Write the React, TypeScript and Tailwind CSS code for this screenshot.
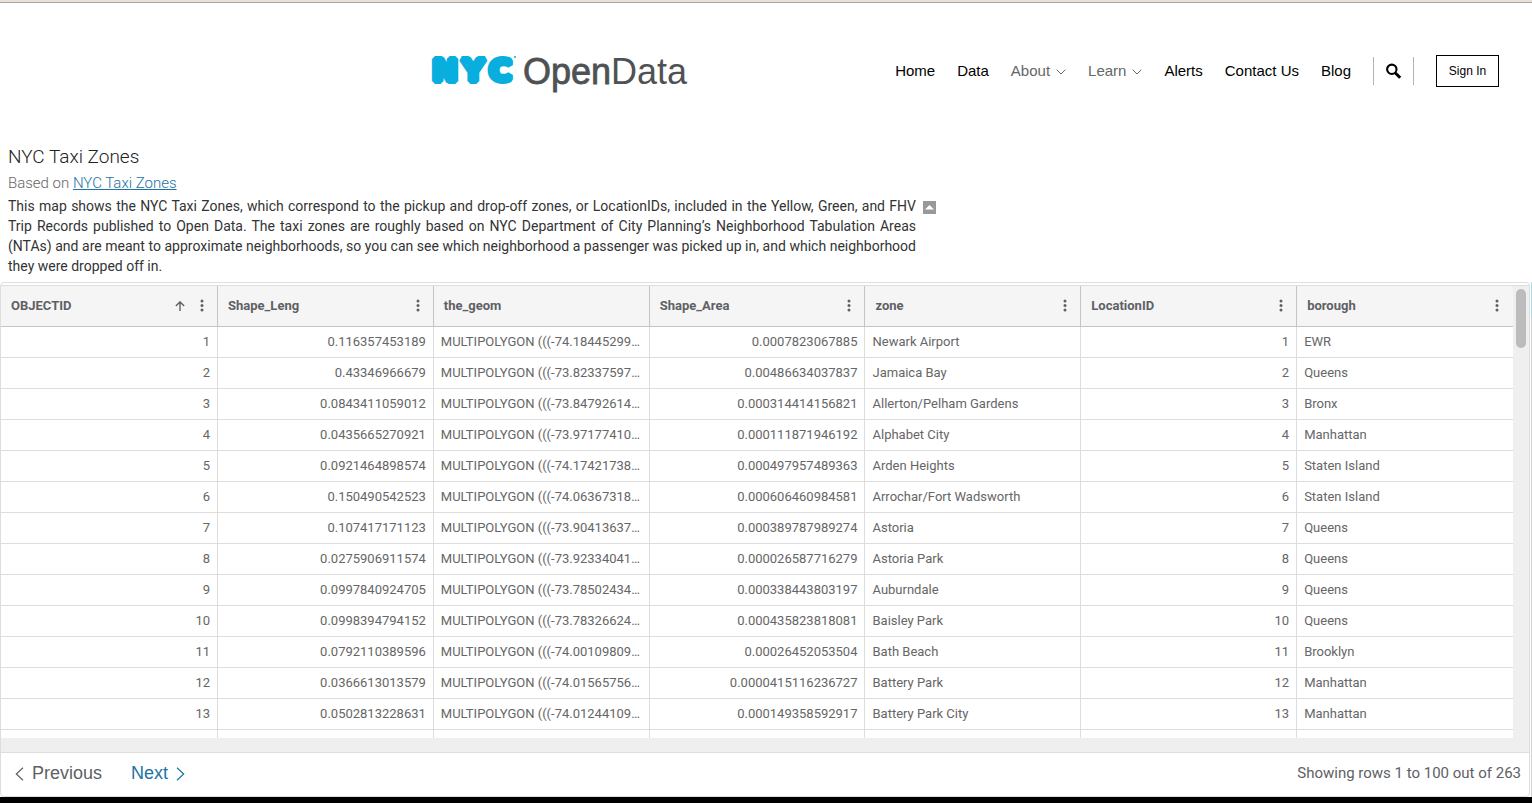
import React from "react";

type Row = [string, string, string, string, string, string, string];

const COLUMNS = [
  { name: "OBJECTID", numeric: true, menu: true, sorted: true },
  { name: "Shape_Leng", numeric: true, menu: true, sorted: false },
  { name: "the_geom", numeric: false, menu: false, sorted: false },
  { name: "Shape_Area", numeric: true, menu: true, sorted: false },
  { name: "zone", numeric: false, menu: true, sorted: false },
  { name: "LocationID", numeric: true, menu: true, sorted: false },
  { name: "borough", numeric: false, menu: true, sorted: false },
];

const ROWS: Row[] = [
  ["1", "0.116357453189", "MULTIPOLYGON (((-74.18445299…", "0.0007823067885", "Newark Airport", "1", "EWR"],
  ["2", "0.43346966679", "MULTIPOLYGON (((-73.82337597…", "0.00486634037837", "Jamaica Bay", "2", "Queens"],
  ["3", "0.0843411059012", "MULTIPOLYGON (((-73.84792614…", "0.000314414156821", "Allerton/Pelham Gardens", "3", "Bronx"],
  ["4", "0.0435665270921", "MULTIPOLYGON (((-73.97177410…", "0.000111871946192", "Alphabet City", "4", "Manhattan"],
  ["5", "0.0921464898574", "MULTIPOLYGON (((-74.17421738…", "0.000497957489363", "Arden Heights", "5", "Staten Island"],
  ["6", "0.150490542523", "MULTIPOLYGON (((-74.06367318…", "0.000606460984581", "Arrochar/Fort Wadsworth", "6", "Staten Island"],
  ["7", "0.107417171123", "MULTIPOLYGON (((-73.90413637…", "0.000389787989274", "Astoria", "7", "Queens"],
  ["8", "0.0275906911574", "MULTIPOLYGON (((-73.92334041…", "0.000026587716279", "Astoria Park", "8", "Queens"],
  ["9", "0.0997840924705", "MULTIPOLYGON (((-73.78502434…", "0.000338443803197", "Auburndale", "9", "Queens"],
  ["10", "0.0998394794152", "MULTIPOLYGON (((-73.78326624…", "0.000435823818081", "Baisley Park", "10", "Queens"],
  ["11", "0.0792110389596", "MULTIPOLYGON (((-74.00109809…", "0.00026452053504", "Bath Beach", "11", "Brooklyn"],
  ["12", "0.0366613013579", "MULTIPOLYGON (((-74.01565756…", "0.0000415116236727", "Battery Park", "12", "Manhattan"],
  ["13", "0.0502813228631", "MULTIPOLYGON (((-74.01244109…", "0.000149358592917", "Battery Park City", "13", "Manhattan"],
];

function Logo() {
  return (
    <a href="#home" aria-label="NYC OpenData" className="shrink-0">
      <svg width="262" height="44" viewBox="0 0 262 44" className="block">
        <g
          fontFamily="DejaVu Sans, sans-serif"
          fontWeight="700"
          fontSize="31"
          fill="#08aedd"
          stroke="#08aedd"
          strokeWidth="6"
          strokeLinejoin="bevel"
        >
          <text x="3" y="32">N</text>
          <text x="33" y="32">Y</text>
          <text x="60" y="32">C</text>
        </g>
        <circle cx="86" cy="8" r="1" fill="#08aedd" />
        <text x="94" y="35" fontFamily="Liberation Sans, sans-serif" fontSize="36" fill="#4f5254">
          <tspan stroke="#4f5254" strokeWidth="0.8">Open</tspan>
          <tspan>Data</tspan>
        </text>
      </svg>
    </a>
  );
}

function Chevron() {
  return (
    <svg width="10" height="6" viewBox="0 0 10 6" fill="none" stroke="currentColor" className="mt-[3px]">
      <path d="M0.7 0.7 5 5 9.3 0.7" />
    </svg>
  );
}

function KebabIcon() {
  return (
    <svg width="4" height="14" viewBox="0 0 4 14" fill="#5e6164">
      <circle cx="2" cy="2" r="1.5" />
      <circle cx="2" cy="6.5" r="1.5" />
      <circle cx="2" cy="11" r="1.5" />
    </svg>
  );
}

function SortIcon() {
  return (
    <svg width="10" height="10" viewBox="0 0 10 10" fill="none" stroke="#5e6164" strokeWidth="1.4">
      <path d="M5 10V1M0.8 5 5 0.9 9.2 5" />
    </svg>
  );
}

export default function App() {
  return (
    <div className="flex h-screen flex-col bg-white font-['Liberation_Sans',sans-serif]">
      <div className="h-[3px] shrink-0 border-b border-[#a9a5a5] bg-[#ede1d6]" />

      <header className="flex h-[135px] shrink-0 items-center justify-between pr-[33px] pl-[28%]">
        <Logo />
        <nav className="flex items-center gap-[22px] text-[15px] leading-5 whitespace-nowrap text-black">
          <a href="#home">Home</a>
          <a href="#data">Data</a>
          <button type="button" className="flex items-center gap-[6px] text-[#666]">
            About <Chevron />
          </button>
          <button type="button" className="flex items-center gap-[6px] text-[#666]">
            Learn <Chevron />
          </button>
          <a href="#alerts">Alerts</a>
          <a href="#contact">Contact Us</a>
          <a href="#blog">Blog</a>
          <button
            type="button"
            aria-label="Search"
            className="flex h-7 w-[41px] items-center justify-center border-x border-[#b3b3b3]"
          >
            <svg width="16" height="16" viewBox="0 0 16 16" fill="none" stroke="#000">
              <circle cx="5.8" cy="6.3" r="4.7" strokeWidth="2.1" />
              <path d="M9.4 10 14.2 14.7" strokeWidth="3" />
            </svg>
          </button>
          <a href="#signin" className="flex h-8 w-[63px] items-center justify-center border border-black text-xs">
            Sign In
          </a>
        </nav>
      </header>

      <section className="shrink-0 px-2 pt-2 pb-[6px] font-[Roboto,sans-serif]">
        <h1 className="text-[19px] leading-[22px] font-light text-[#222]">NYC Taxi Zones</h1>
        <p className="pt-[5px] text-[15px] leading-5 font-light text-[#666]">
          Based on{" "}
          <a href="#source" className="text-[#1b74a3] underline">
            NYC Taxi Zones
          </a>
        </p>
        <div className="flex items-start gap-[7px] pt-[3px]">
          <p className="w-[908px] text-justify text-sm leading-5 text-[#333]">
            This map shows the NYC Taxi Zones, which correspond to the pickup and drop-off zones, or LocationIDs,
            included in the Yellow, Green, and FHV Trip Records published to Open Data. The taxi zones are roughly
            based on NYC Department of City Planning’s Neighborhood Tabulation Areas (NTAs) and are meant to
            approximate neighborhoods, so you can see which neighborhood a passenger was picked up in, and which
            neighborhood they were dropped off in.
          </p>
          <button
            type="button"
            aria-label="Collapse description"
            className="mt-[5px] flex size-[13px] items-center justify-center bg-[#999]"
          >
            <svg width="9" height="5" viewBox="0 0 9 5" fill="#fff">
              <path d="M0 4.5 4.5 0 9 4.5Z" />
            </svg>
          </button>
        </div>
      </section>

      <div className="flex min-h-0 flex-1 gap-px border-b-[6px] border-black">
        <main className="flex min-w-0 flex-1 flex-col rounded border border-[#dedede] pt-[2px] font-[Roboto,sans-serif]">
          <div className="flex min-h-0 flex-1 border-t border-[#dedede]">
            <div className="min-w-0 flex-1 overflow-hidden">
              <table className="w-full table-fixed border-separate border-spacing-0 text-[#666]">
                <colgroup>
                  <col className="w-[217px]" />
                  <col span={6} />
                </colgroup>
                <thead>
                  <tr className="h-[41px] bg-[#f5f5f5]">
                    {COLUMNS.map((column) => (
                      <th
                        key={column.name}
                        scope="col"
                        className="border-r border-b border-[#c4c4c4] p-0 pr-[13px] pl-[10px] text-left text-[13px] font-bold text-[#5e6164] last:border-r-0 last:pr-[14px]"
                      >
                        <div className="flex items-center justify-between">
                          <span>{column.name}</span>
                          <span className="flex items-center gap-[15px]">
                            {column.sorted && <SortIcon />}
                            {column.menu && (
                              <button type="button" aria-label={`${column.name} options`}>
                                <KebabIcon />
                              </button>
                            )}
                          </span>
                        </div>
                      </th>
                    ))}
                  </tr>
                </thead>
                <tbody>
                  {ROWS.map((row) => (
                    <tr key={row[0]} className="h-[31px]">
                      {row.map((value, i) => (
                        <td
                          key={i}
                          className={`border-r border-b border-[#dedede] px-[7px] py-0 text-[13px] leading-5 whitespace-nowrap last:border-r-0 ${
                            COLUMNS[i].numeric ? "text-right" : "text-left"
                          }`}
                        >
                          {value}
                        </td>
                      ))}
                    </tr>
                  ))}
                  <tr className="h-[31px]">
                    {COLUMNS.map((column) => (
                      <td key={column.name} className="border-r border-[#dedede] last:border-r-0" />
                    ))}
                  </tr>
                </tbody>
              </table>
            </div>
            <div className="w-4 shrink-0 bg-[#efefef] px-[3px] pt-[3px]">
              <div className="h-[59px] rounded-full bg-[#bcbcbc]" />
            </div>
          </div>
          <div className="h-[15px] shrink-0 border-b border-[#dedede] bg-[#efefef]" />
          <footer className="flex h-[43px] shrink-0 items-center justify-between pr-2 pb-1 pl-[14px] text-[#5e6164]">
            <div className="flex gap-[29px] font-['Liberation_Sans',sans-serif] text-lg leading-6">
              <button type="button" className="flex items-center gap-2">
                <svg width="9" height="14" viewBox="0 0 9 14" fill="none" stroke="currentColor" strokeWidth="1.2" className="mt-[3px]">
                  <path d="M8 0.7 1.3 7 8 13.3" />
                </svg>
                Previous
              </button>
              <button type="button" className="flex items-center gap-2 text-[#1b74a3]">
                Next
                <svg width="9" height="14" viewBox="0 0 9 14" fill="none" stroke="currentColor" strokeWidth="1.2" className="mt-[3px]">
                  <path d="M1 0.7 7.7 7 1 13.3" />
                </svg>
              </button>
            </div>
            <p className="text-[15px] leading-6">Showing rows 1 to 100 out of 263</p>
          </footer>
        </main>
        <div className="flex w-px shrink-0 flex-col bg-[#d4d4d4]">
          <div className="h-9 bg-[#9fe0ea]" />
        </div>
      </div>
    </div>
  );
}
